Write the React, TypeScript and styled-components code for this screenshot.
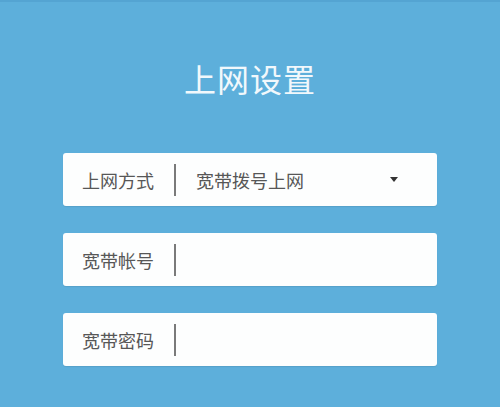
import styled, { createGlobalStyle } from "styled-components";

const GlobalStyle = createGlobalStyle`
  html, body {
    margin: 0;
    padding: 0;
    background: #5dafdb;
  }
  body {
    font-family: "Noto Sans CJK SC", "Noto Sans", sans-serif;
  }
`;

const Page = styled.div`
  width: 500px;
  height: 407px;
  box-sizing: border-box;
  padding-top: 56px;
  display: flex;
  flex-direction: column;
  align-items: center;
  background: #5dafdb;
  border-top: 2px solid #54a4d2;
  overflow: hidden;
`;

const Title = styled.h1`
  margin: 0;
  height: 40px;
  line-height: 40px;
  font-size: 32px;
  font-weight: 400;
  color: #f1f8fc;
  letter-spacing: 1px;
`;

const FieldList = styled.div`
  margin-top: 55px;
  display: flex;
  flex-direction: column;
  gap: 27px;
`;

const Field = styled.div`
  width: 374px;
  height: 53px;
  box-sizing: border-box;
  padding: 0 19px;
  display: flex;
  align-items: center;
  background: #fdfefe;
  border-radius: 3px;
  box-shadow: 0 1px 1px rgb(0 0 0 / 8%);
`;

const Label = styled.span`
  width: 74px;
  font-size: 18px;
  color: #575757;
  white-space: nowrap;
`;

const Divider = styled.span`
  width: 2px;
  height: 32px;
  margin: 0 20px 0 18px;
  background: #7a7a7a;
`;

const Value = styled.span`
  flex: 1;
  font-size: 18px;
  color: #575757;
  white-space: nowrap;
`;

const Caret = styled.span`
  width: 0;
  height: 0;
  margin-right: 20px;
  border-left: 4px solid transparent;
  border-right: 4px solid transparent;
  border-top: 5px solid #333;
`;

interface FormRowProps {
  label: string;
  value?: string;
  select?: boolean;
}

const FormRow = ({ label, value, select }: FormRowProps) => (
  <Field>
    <Label>{label}</Label>
    <Divider />
    <Value>{value}</Value>
    {select && <Caret />}
  </Field>
);

export default function App() {
  return (
    <>
      <GlobalStyle />
      <Page>
        <Title>上网设置</Title>
        <FieldList>
          <FormRow label="上网方式" value="宽带拨号上网" select />
          <FormRow label="宽带帐号" />
          <FormRow label="宽带密码" />
        </FieldList>
      </Page>
    </>
  );
}
